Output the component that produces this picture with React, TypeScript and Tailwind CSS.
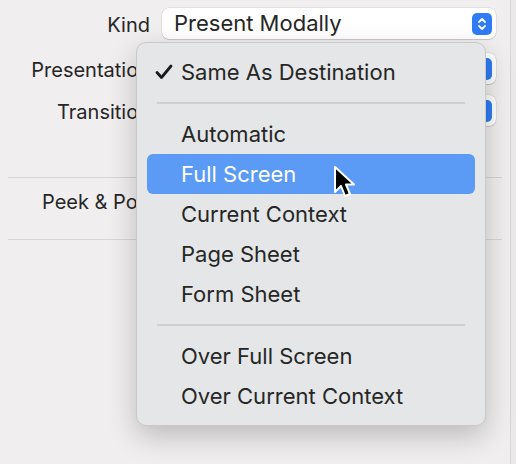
import React from "react";

const items = [
  { label: "Same As Destination", checked: true },
  { sep: true },
  { label: "Automatic" },
  { label: "Full Screen", active: true },
  { label: "Current Context" },
  { label: "Page Sheet" },
  { label: "Form Sheet" },
  { sep: true },
  { label: "Over Full Screen" },
  { label: "Over Current Context" },
];

const Stepper = () => (
  <div className="w-[20px] h-[22px] rounded-[5px] bg-[#2f7cf6] flex items-center justify-center">
    <svg width="10" height="14" viewBox="0 0 10 14" fill="none" stroke="white" strokeWidth="1.8" strokeLinecap="round" strokeLinejoin="round">
      <path d="M2 5 L5 2 L8 5" />
      <path d="M2 9 L5 12 L8 9" />
    </svg>
  </div>
);

const Row = ({ label, value, top }: { label: string; value?: string; top: string }) => (
  <div className={`flex items-center ${top}`}>
    <div className="w-[150px] text-right text-[20px] leading-[28px] pt-[2px] text-[#262626]">{label}</div>
    <div className="ml-[12px] w-[334px] h-[31px] bg-white rounded-[7px] shadow-[0_0_0_0.5px_rgba(0,0,0,0.12),0_1px_1px_rgba(0,0,0,0.12)] flex items-center pl-[12px] pr-[4px]">
      <span className="flex-1 text-[22px] text-[#262626]">{value}</span>
      <Stepper />
    </div>
  </div>
);

export default function App() {
  return (
    <div
      className="relative w-[516px] h-[464px] overflow-hidden bg-[#f1eeef] flex"
      style={{ fontFamily: "Inter, 'Liberation Sans', sans-serif" }}
    >
      <div className="w-[511px] h-full border-r border-[#d9d6d7] flex flex-col pt-[8px]">
        <Row label="Kind" value="Present Modally" top="" />
        <Row label="Presentation" top="mt-[14px]" />
        <Row label="Transition" top="mt-[11px]" />
        <div className="mt-[51px] mx-[8px] h-px bg-[#d8d5d6]" />
        <div className="h-[61px] pt-[10px] pl-[42px] text-[20px] leading-[28px] text-[#262626]">
          Peek &amp; Pop
        </div>
        <div className="mx-[8px] h-px bg-[#d8d5d6]" />
      </div>
      <div className="flex-1 bg-[#ebe8e9]" />

      {/* dropdown menu */}
      <div className="absolute left-[136px] top-[42px] w-[350px] h-[384px] rounded-[10px] bg-[#e4e6e7] border border-[#c9c9ca] shadow-[0_10px_28px_rgba(0,0,0,0.22)] py-[9px] px-[10px]">
        {items.map((it, i) =>
          it.sep ? (
            <div key={i} className="h-[22px] flex items-center px-[10px]">
              <div className="h-[2px] w-full bg-[#cdd0d1]" />
            </div>
          ) : (
            <div
              key={i}
              className={`h-[40px] flex items-center rounded-[6px] text-[22px] ${
                it.active ? "bg-[#5b9af5] text-white" : "text-[#262626]"
              }`}
            >
              <span className="w-[34px] flex justify-end pr-[8px]">
                {it.checked && (
                  <svg width="18" height="16" viewBox="0 0 18 16" fill="none" stroke="#1c1c1c" strokeWidth="2.8" strokeLinecap="round" strokeLinejoin="round">
                    <path d="M2 8.5 L6.5 13.5 L16 2" />
                  </svg>
                )}
              </span>
              <span>{it.label}</span>
            </div>
          )
        )}
      </div>

      {/* cursor */}
      <svg className="absolute left-[333px] top-[165px]" width="26" height="36" viewBox="0 0 26 36">
        <path
          d="M2 2 L2 27 L8 21 L12 31 L17 29 L13 19.5 L21 19.5 Z"
          fill="black"
          stroke="white"
          strokeWidth="2"
          strokeLinejoin="round"
        />
      </svg>
    </div>
  );
}
